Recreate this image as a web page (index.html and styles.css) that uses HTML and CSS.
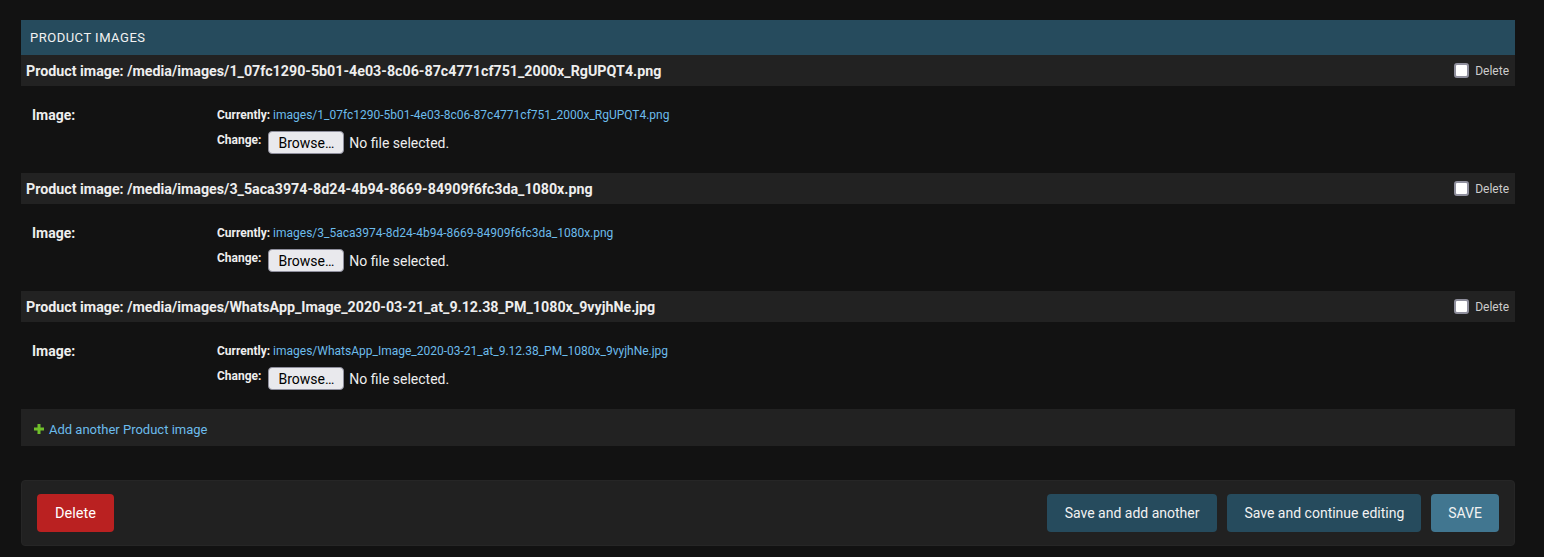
FILE: index.html
```html
<!DOCTYPE html>
<html lang="en">
<head>
<meta charset="UTF-8">
<meta name="viewport" content="width=device-width, initial-scale=1.0">
<title>Change product | Django site admin</title>
<link rel="stylesheet" href="styles.css">
</head>
<body>

<div class="content">
  <fieldset class="module inline-group">
    <h2 class="caption">Product images</h2>

    <div class="inline-related">
      <h3 class="inline-head">
        <span>Product image: /media/images/1_07fc1290-5b01-4e03-8c06-87c4771cf751_2000x_RgUPQT4.png</span>
        <label class="delete"><span class="check"></span>Delete</label>
      </h3>
      <div class="form-row">
        <label class="field-label">Image:</label>
        <div class="file-upload">
          <p class="currently"><b>Currently:</b> <a href="#">images/1_07fc1290-5b01-4e03-8c06-87c4771cf751_2000x_RgUPQT4.png</a></p>
          <p class="change"><b>Change:</b> <button class="browse">Browse…</button> <span class="nofile">No file selected.</span></p>
        </div>
      </div>
    </div>

    <div class="inline-related">
      <h3 class="inline-head">
        <span>Product image: /media/images/3_5aca3974-8d24-4b94-8669-84909f6fc3da_1080x.png</span>
        <label class="delete"><span class="check"></span>Delete</label>
      </h3>
      <div class="form-row">
        <label class="field-label">Image:</label>
        <div class="file-upload">
          <p class="currently"><b>Currently:</b> <a href="#">images/3_5aca3974-8d24-4b94-8669-84909f6fc3da_1080x.png</a></p>
          <p class="change"><b>Change:</b> <button class="browse">Browse…</button> <span class="nofile">No file selected.</span></p>
        </div>
      </div>
    </div>

    <div class="inline-related">
      <h3 class="inline-head">
        <span>Product image: /media/images/WhatsApp_Image_2020-03-21_at_9.12.38_PM_1080x_9vyjhNe.jpg</span>
        <label class="delete"><span class="check"></span>Delete</label>
      </h3>
      <div class="form-row">
        <label class="field-label">Image:</label>
        <div class="file-upload">
          <p class="currently"><b>Currently:</b> <a href="#">images/WhatsApp_Image_2020-03-21_at_9.12.38_PM_1080x_9vyjhNe.jpg</a></p>
          <p class="change"><b>Change:</b> <button class="browse">Browse…</button> <span class="nofile">No file selected.</span></p>
        </div>
      </div>
    </div>

    <div class="add-row">
      <a href="#">
        <svg width="10" height="10" viewBox="0 0 10 10"><path d="M3.5 0h3v3.5H10v3H6.5V10h-3V6.5H0v-3h3.5z" fill="#70bf2b"/></svg>
        Add another Product image
      </a>
    </div>
  </fieldset>

  <div class="submit-row">
    <a href="#" class="deletelink">Delete</a>
    <div class="buttons">
      <button class="btn">Save and add another</button>
      <button class="btn">Save and continue editing</button>
      <button class="btn default">SAVE</button>
    </div>
  </div>
</div>

</body>
</html>
```

FILE: styles.css
```css
/* dark admin */
body {
  margin: 0;
  background: #121212;
  color: #eeeeee;
  font-family: Roboto, "Liberation Sans", sans-serif;
  font-size: 14px;
}
a {
  color: #6cbcec;
  text-decoration: none;
}
.content {
  padding: 20px 29px 0 21px;
}
.module {
  margin: 0;
  padding: 0;
  border: 0;
}
.caption {
  margin: 0;
  height: 35px;
  line-height: 35px;
  padding: 0 9px;
  background: #264b5d;
  color: #f2f2f2;
  font-size: 13px;
  font-weight: 400;
  letter-spacing: 0.5px;
  text-transform: uppercase;
}
.inline-head {
  margin: 0;
  height: 31px;
  padding: 0 6px 0 5px;
  display: flex;
  align-items: center;
  justify-content: space-between;
  background: #222222;
  color: #eeeeee;
  font-size: 14.25px;
  font-weight: 700;
}
.delete {
  display: flex;
  align-items: center;
  gap: 6px;
  font-size: 12px;
  font-weight: 400;
  color: #cccccc;
}
.check {
  width: 11px;
  height: 11px;
  background: #ffffff;
  border: 2px solid #8f8f9d;
  border-radius: 3px;
}
.form-row {
  display: flex;
  height: 87px;
  box-sizing: border-box;
  padding: 21px 11px 0;
}
.field-label {
  width: 185px;
  flex: none;
  font-weight: 700;
  line-height: 16px;
}
.file-upload p {
  margin: 0;
  font-size: 12px;
}
.currently {
  line-height: 16px;
}
.change {
  display: flex;
  align-items: center;
  margin-top: 8px !important;
}
.change b {
  margin-right: 7px;
  position: relative;
  top: -3px;
}
.browse {
  height: 23px;
  padding: 0 9px;
  background: #e9e9ed;
  border: 1px solid #8f8f9d;
  border-radius: 4px;
  color: #000000;
  font-family: inherit;
  font-size: 14px;
}
.nofile {
  margin-left: 5px;
  font-size: 14px;
  color: #eeeeee;
}
.add-row {
  height: 37px;
  box-sizing: border-box;
  padding: 3px 0 0 13px;
  display: flex;
  align-items: center;
  background: #222222;
  font-size: 13px;
}
.add-row a {
  display: flex;
  align-items: center;
  gap: 5px;
}
.submit-row {
  margin-top: 34px;
  height: 66px;
  box-sizing: border-box;
  padding: 0 15px;
  display: flex;
  align-items: center;
  justify-content: space-between;
  background: #212121;
  border: 1px solid #262626;
  border-radius: 4px;
}
.deletelink {
  display: flex;
  align-items: center;
  height: 38px;
  padding: 0 18px;
  background: #ba2121;
  border-radius: 4px;
  color: #ffffff;
  font-size: 14.5px;
}
.buttons {
  display: flex;
  gap: 10px;
}
.btn {
  height: 38px;
  padding: 0 17px;
  background: #264b5d;
  border: 0;
  border-radius: 4px;
  color: #f2f2f2;
  font-family: inherit;
  font-size: 14px;
}
.btn:first-child {
  padding: 0 18px;
}
.btn.default {
  background: #417690;
}
```
